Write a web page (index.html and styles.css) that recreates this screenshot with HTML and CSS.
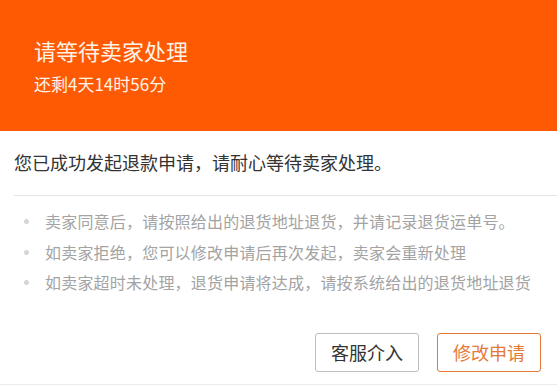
FILE: index.html
```html
<!DOCTYPE html>
<html lang="zh-CN">
<head>
    <meta charset="UTF-8">
    <meta name="viewport" content="width=device-width, initial-scale=1.0">
    <title>退款详情</title>
    <link rel="stylesheet" href="styles.css">
</head>
<body>
    <div class="status">
        <h1 class="status-title">请等待卖家处理</h1>
        <p class="status-time">还剩4天14时56分</p>
    </div>

    <div class="content">
        <p class="message">您已成功发起退款申请，请耐心等待卖家处理。</p>

        <ul class="tips">
            <li>卖家同意后，请按照给出的退货地址退货，并请记录退货运单号。</li>
            <li>如卖家拒绝，您可以修改申请后再次发起，卖家会重新处理</li>
            <li>如卖家超时未处理，退货申请将达成，请按系统给出的退货地址退货</li>
        </ul>

        <div class="actions">
            <button type="button" class="btn">客服介入</button>
            <button type="button" class="btn btn-primary">修改申请</button>
        </div>
    </div>

    <div class="footer-bar"></div>
</body>
</html>
```

FILE: styles.css
```css
body {
    margin: 0;
    font-family: "Noto Sans CJK SC", "Noto Sans", sans-serif;
    background: #ffffff;
    color: #333333;
}

.status {
    height: 131px;
    box-sizing: border-box;
    padding: 35px 0 0 34px;
    background: #fe5a03;
    color: #fff3e8;
}

.status-title {
    margin: 0;
    font-size: 22px;
    font-weight: normal;
    line-height: 30px;
}

.status-time {
    margin: 7px 0 0;
    font-size: 17px;
    line-height: 24px;
}

.content {
    background: #ffffff;
}

.message {
    margin: 0 0 0 14px;
    padding: 18px 0 20px;
    font-size: 18px;
    line-height: 26px;
    color: #333333;
    border-bottom: 1px solid #e6e6e6;
}

.tips {
    list-style: none;
    margin: 0;
    padding: 10px 0 0 45px;
}

.tips li {
    position: relative;
    font-size: 16px;
    line-height: 30.5px;
    letter-spacing: 0.2px;
    color: #a3a3a3;
    white-space: nowrap;
}

.tips li::before {
    content: "";
    position: absolute;
    left: -21px;
    top: 13px;
    width: 5px;
    height: 5px;
    border-radius: 50%;
    background: #d6d6d6;
}

.actions {
    display: flex;
    justify-content: flex-end;
    gap: 18px;
    padding: 35px 16px 12px 0;
}

.btn {
    width: 104px;
    height: 39px;
    padding: 0;
    font-family: inherit;
    font-size: 18px;
    color: #333333;
    background: #ffffff;
    border: 1px solid #bdbdbd;
    border-radius: 3px;
}

.btn-primary {
    color: #e47a38;
    border-color: #e47a38;
}

.footer-bar {
    height: 10px;
    background: #ebebeb;
}
```
